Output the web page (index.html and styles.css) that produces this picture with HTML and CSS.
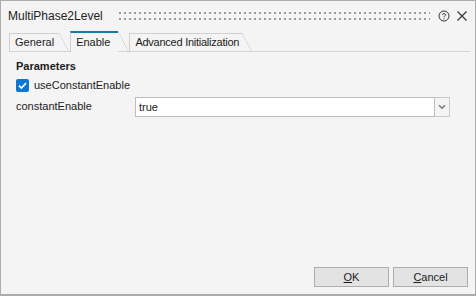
FILE: index.html
```html
<!DOCTYPE html>
<html lang="en">
<head>
	<meta charset="UTF-8">
	<meta name="viewport" content="width=device-width, initial-scale=1.0">
	<title>MultiPhase2Level</title>
	<link rel="stylesheet" href="styles.css">
</head>
<body>

<div class="window">
	<div class="titleBar">
		<span class="title">MultiPhase2Level</span>
		<div class="grip"></div>
		<svg class="helpIcon" width="12" height="12" viewBox="0 0 12 12">
			<circle cx="6" cy="6" r="5" fill="none" stroke="#333" stroke-width="1"/>
			<path d="M4.4 4.8 C4.4 3.2 7.6 3.2 7.6 4.8 C7.6 6 6 5.9 6 7.2" fill="none" stroke="#333" stroke-width="1"/>
			<rect x="5.5" y="8.2" width="1" height="1" fill="#333"/>
		</svg>
		<svg class="closeIcon" width="12" height="12" viewBox="0 0 12 12">
			<path d="M1.5 1.5 L10.5 10.5 M10.5 1.5 L1.5 10.5" stroke="#333" stroke-width="1.1"/>
		</svg>
	</div>

	<div class="tabStrip">
		<div class="tab">General</div>
		<div class="tab active">Enable</div>
		<div class="tab long">Advanced Initialization</div>
	</div>

	<div class="panel">
		<div class="sectionTitle">Parameters</div>
		<label class="checkRow">
			<span class="checkBox">
				<svg width="13" height="13" viewBox="0 0 13 13">
					<path d="M3 6.6 L5.4 9 L10 4.2" fill="none" stroke="#fff" stroke-width="1.7"/>
				</svg>
			</span>
			useConstantEnable
		</label>
		<div class="fieldRow">
			<span class="fieldLabel">constantEnable</span>
			<div class="comboBox">
				<div class="comboValue">true</div>
				<div class="comboButton">
					<svg width="8" height="6" viewBox="0 0 8 6">
						<path d="M1 1.2 L4 4.2 L7 1.2" fill="none" stroke="#7a7a7a" stroke-width="1.6"/>
					</svg>
				</div>
			</div>
		</div>
	</div>

	<div class="footer">
		<button><u>O</u>K</button>
		<button><u>C</u>ancel</button>
	</div>
</div>

</body>
</html>
```

FILE: styles.css
```css
body {
	margin: 0;
	font-family: "Liberation Sans", Arial, sans-serif;
	font-size: 11px;
	color: #1b1b1b;
}
.window {
	width: 476px;
	height: 296px;
	box-sizing: border-box;
	border: 1px solid #acacac;
	border-bottom-width: 2px;
	background-color: #f4f4f4;
	display: flex;
	flex-direction: column;
}
.titleBar {
	height: 29px;
	display: flex;
	align-items: center;
	padding: 0 7px 0 7px;
}
.title {
	font-size: 12px;
	color: #222;
}
.grip {
	flex: 1;
	height: 8px;
	margin: 0 8px 0 16px;
	background: conic-gradient(at 2px 2px, #0000 75%, #9c9c9c 0) 0 0 / 5px 6px;
}
.closeIcon {
	margin-left: 6px;
}
.tabStrip {
	height: 21px;
	display: flex;
	align-items: flex-end;
	margin: 0 5px 0 8px;
	border-bottom: 1px solid #d4d4d4;
}
.tab {
	position: relative;
	height: 17px;
	line-height: 17px;
	padding: 0 5px 0 5px;
	margin-right: 11px;
	border-top: 1px solid #cfcfcf;
	border-left: 1px solid #cfcfcf;
	background-color: #f4f4f4;
}
.tab.long {
	letter-spacing: -0.25px;
	padding-right: 3px;
}
.tab::after {
	content: '';
	position: absolute;
	top: -1px;
	right: -10px;
	width: 10px;
	height: 19px;
	background: linear-gradient(to top right, transparent calc(50% - 0.6px), #cfcfcf, transparent calc(50% + 0.6px));
}
.tab.active {
	height: 19px;
	line-height: 19px;
	padding-right: 8px;
	margin-bottom: -1px;
	border-top: 2px solid #167aa9;
	z-index: 1;
}
.tab.active::after {
	top: -2px;
	height: 22px;
	right: -11px;
	width: 11px;
}
.panel {
	flex: 1;
	padding: 6px 8px 0 15px;
}
.sectionTitle {
	font-weight: bold;
	line-height: 16px;
}
.checkRow {
	display: flex;
	align-items: center;
	height: 16px;
	margin-top: 3px;
}
.checkBox {
	width: 13px;
	height: 13px;
	border-radius: 2px;
	background-color: #0a78d2;
	margin-right: 5px;
	display: flex;
}
.fieldRow {
	display: flex;
	align-items: center;
	margin-top: 4px;
}
.fieldLabel {
	width: 119px;
	margin-top: -2px;
}
.comboBox {
	display: flex;
	height: 20px;
	margin-right: 17px;
	flex: 1;
}
.comboValue {
	flex: 1;
	box-sizing: border-box;
	border: 1px solid #bdbdbd;
	background-color: #fff;
	padding-left: 3px;
	line-height: 18px;
}
.comboButton {
	width: 15px;
	box-sizing: border-box;
	border: 1px solid #c9c9c9;
	border-left: none;
	display: flex;
	align-items: center;
	justify-content: center;
}
.footer {
	display: flex;
	justify-content: flex-end;
	gap: 4px;
	padding: 0 7px 7px 0;
}
button {
	width: 75px;
	height: 20px;
	padding: 0;
	font-family: "Liberation Sans", Arial, sans-serif;
	font-size: 11px;
	color: #1b1b1b;
	background-color: #e3e3e3;
	border: 1px solid #adadad;
}
```
